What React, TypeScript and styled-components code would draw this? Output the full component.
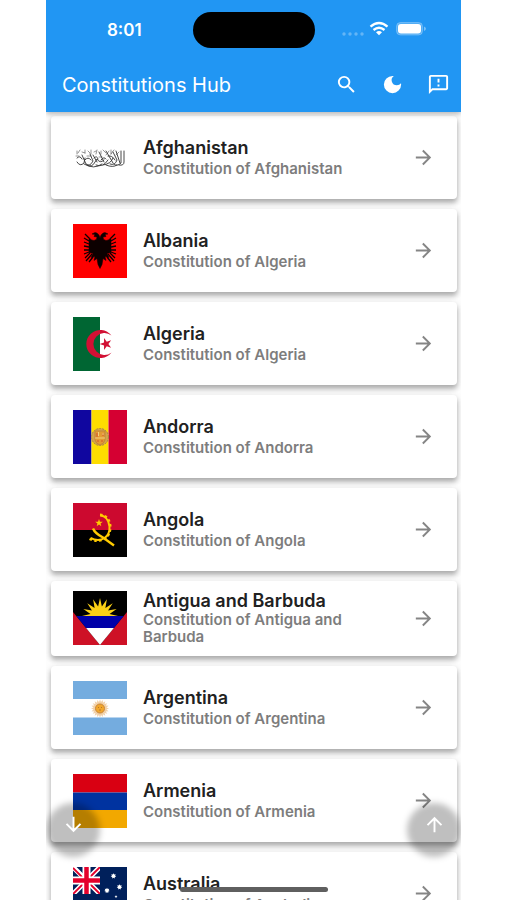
import React from "react";
import styled, { createGlobalStyle } from "styled-components";
import {
  MdArrowDownward,
  MdArrowForward,
  MdArrowUpward,
  MdDarkMode,
  MdOutlineFeedback,
  MdSearch,
} from "react-icons/md";

const GlobalStyle = createGlobalStyle`
  *, *::before, *::after { box-sizing: border-box; }
  body { margin: 0; background: #ffffff; font-family: Inter, "Liberation Sans", sans-serif; }
  button { font: inherit; color: inherit; border: 0; padding: 0; background: none; cursor: pointer; }
`;

const Page = styled.div`
  height: 100vh;
  padding: 0 46px;
`;

const Phone = styled.div`
  position: relative;
  display: flex;
  flex-direction: column;
  height: 100%;
  overflow: hidden;
  background: #fdfdfd;
`;

const Header = styled.header`
  position: relative;
  z-index: 1;
  flex: none;
  background: #2196f3;
  color: #ffffff;
  box-shadow: 0 2px 5px rgba(0, 0, 0, 0.28);
`;

const StatusBar = styled.div`
  display: grid;
  grid-template-columns: 1fr 122px 1fr;
  align-items: center;
  height: 59px;
`;

const Clock = styled.time`
  padding-left: 10px;
  text-align: center;
  font-size: 17px;
  font-weight: 600;
  line-height: 20px;
`;

const Island = styled.div`
  height: 36px;
  border-radius: 18px;
  background: #000000;
`;

const StatusIcons = styled.div`
  display: flex;
  align-items: center;
  padding-left: 26px;
`;

const TitleBar = styled.div`
  display: flex;
  align-items: center;
  justify-content: space-between;
  height: 53px;
  padding: 0 11px 2px 16px;
`;

const AppTitle = styled.h1`
  margin: 0;
  font-size: 20px;
  font-weight: 400;
  line-height: 24px;
`;

const Actions = styled.div`
  display: flex;
  gap: 23px;
`;

const IconButton = styled.button`
  display: flex;
  font-size: 23px;
`;

const List = styled.ul`
  display: flex;
  flex-direction: column;
  gap: 10px;
  flex: 1;
  min-height: 0;
  margin: 0;
  padding: 4px 4px 0 5px;
  overflow: hidden;
  list-style: none;
`;

const Item = styled.li`
  flex: none;
`;

const Card = styled.button`
  display: flex;
  align-items: center;
  gap: 16px;
  width: 100%;
  min-height: 75px;
  padding: 0 22px;
  border-radius: 4px;
  background: #ffffff;
  text-align: left;
  box-shadow: 0 4px 5px rgba(0, 0, 0, 0.24), 0 2px 7px rgba(0, 0, 0, 0.14);
`;

const FlagFrame = styled.span<{ $compact?: boolean }>`
  display: flex;
  flex: none;
  padding: ${(p) => (p.$compact ? "10px 0 11px" : "15px 0 14px")};
`;

const Labels = styled.span<{ $compact?: boolean }>`
  display: flex;
  flex: 1;
  flex-direction: column;
  gap: ${(p) => (p.$compact ? 0 : 2)}px;
  padding: 0 16px ${(p) => (p.$compact ? 2 : 0)}px 0;
`;

const Name = styled.span`
  color: #212121;
  font-size: 18px;
  font-weight: 600;
  line-height: 20px;
`;

const Detail = styled.span`
  color: #7d7d7d;
  font-size: 15px;
  font-weight: 600;
  line-height: 17px;
`;

const Arrow = styled(MdArrowForward)`
  flex: none;
  color: #858585;
  font-size: 23px;
`;

const JumpButton = styled.button<{ $side: "left" | "right" }>`
  position: absolute;
  bottom: 43px;
  ${(p) => p.$side}: 0;
  display: flex;
  align-items: center;
  justify-content: center;
  width: 54px;
  height: 54px;
  padding-bottom: 12px;
  color: #ffffff;
  font-size: 23px;

  &::before {
    content: "";
    position: absolute;
    inset: 0;
    border-radius: 50%;
    background: rgba(0, 0, 0, 0.25);
    filter: blur(3px);
  }

  svg { position: relative; }
`;

const HomeIndicator = styled.div`
  position: absolute;
  bottom: 8px;
  left: 50%;
  width: 148px;
  height: 5px;
  border-radius: 3px;
  background: #5f5f5f;
  transform: translateX(-50%);
`;

const star = (cx: number, cy: number, r: number, points = 5, inner = 0.4, turn = -90) =>
  Array.from({ length: points * 2 }, (_, i) => {
    const a = ((turn + (i * 180) / points) * Math.PI) / 180;
    const d = i % 2 ? r * inner : r;
    return `${(cx + d * Math.cos(a)).toFixed(2)},${(cy + d * Math.sin(a)).toFixed(2)}`;
  }).join(" ");

const Flag = ({ children }: { children: React.ReactNode }) => (
  <svg width="54" height="54" viewBox="0 0 54 54" aria-hidden="true">{children}</svg>
);

const Afghanistan = () => (
  <Flag>
    <g fill="none" stroke="#333" strokeWidth=".9" strokeLinecap="round">
      <path d="M4 31q3 5 7 1l1-5M9 24l4 9q4 3 7-3l-3-7M14 34q5 3 8-3l2-3q3 5 7 1M20 24l4 7M23 34q7 3 12-5M26 21l5 10M30 34q8-1 10-7M33 20l7 12M37 33q5 2 7-4l-4-8M43 20l4 12M48 20v12q-4 4-7 1M51 20v11q0 4-5 3" />
      <path d="M4 27q3-3 5 1M12 29q3-4 6 0M21 27q3-3 4 1M28 29q3-4 5-1M35 25q4-1 7 4M11 33q10 6 18 0M33 34q7 3 11 0" />
      <path d="M4 20v3M7 19l-2 3M9 21l3 1M12 19v3M15 20l2 2M18 19v4M21 21l2-1M24 19l-1 4M28 20v3M30 19l3 3M36 20l-3 4M38 19v4M41 19l-3 4M46 21l-3 3M3 25h3M14 25h4M26 26h3" strokeWidth=".8" opacity=".65" />
    </g>
  </Flag>
);

const Albania = () => (
  <Flag>
    <path fill="#f00" d="M0 0h54v54H0z" />
    <g fill="#0c0000" stroke="#0c0000">
      <path
        strokeWidth=".5"
        d="M27 14q-1-5-5-5.500l-3 1.500 3 .5-1 2 3 .5q0 3-3 3.500-3 0-5-3v15l4 1-2 4 4-1-1 4 3-2 1 6 2 4 2-4 1-6 3 2-1-4 4 1-2-4 4-1v-15q-2 3-5 3-3-.5-3-3.500l3-.5-1-2 3-.5-3-1.500q-4 .5-5 5.500z"
      />
      <path
        fill="none"
        strokeWidth="1.300"
        d="M16 14l-4-4M16 17l-5-3M16 20l-5-2M16 23l-5-1M16 26h-5M16 28l-5 2M17 29l-5 5M19 30l-6 7M20 33l-4 5M38 14l4-4M38 17l5-3M38 20l5-2M38 23l5-1M38 26h5M38 28l5 2M37 29l5 5M35 30l6 7M34 33l4 5"
      />
    </g>
  </Flag>
);

const Algeria = () => (
  <Flag>
    <path fill="#fff" d="M0 0h54v54H0z" />
    <path fill="#063" d="M0 0h27v54H0z" />
    <path fill="#d21034" d="M38.500 18.600a14 14 0 1 0 0 16.800 11 11 0 1 1 0-16.800z" />
    <polygon fill="#d21034" points={star(33, 27, 6.3, 5, 0.38, -180)} />
  </Flag>
);

const Andorra = () => (
  <Flag>
    <path fill="#10069f" d="M0 0h18.500v54H0z" />
    <path fill="#fedd00" d="M18.500 0h17v54h-17z" />
    <path fill="#d50032" d="M35.500 0H54v54H35.500z" />
    <circle cx="27" cy="27" r="8.500" fill="#d6a548" stroke="#a58246" strokeDasharray="2 1" />
    <path d="M22 21h10v9q-1 4-5 5-4-1-5-5z" fill="#e39a33" stroke="#c0853a" />
    <path d="M24 23v4m6-4v3M24 31h2m3-1v2" stroke="#d0572d" />
    <path d="M25.500 22v4M22 28h10M29 24h2" stroke="#f3cf7d" fill="none" />
  </Flag>
);

const Angola = () => (
  <Flag>
    <path fill="#cc092f" d="M0 0h54v27H0z" />
    <path d="M0 27h54v27H0z" />
    <g fill="none" stroke="#ffcb00">
      <path d="M27 12.500q8 0 9.500 11 .5 8-5 11.500-6 4-14 0" strokeWidth="2" />
      <path d="M27 11.500q9.500 1 10.500 12 0 9-6 12.500-7 4-15 0" strokeWidth="2.200" strokeDasharray="2.500 2.500" />
      <path d="M20 25.500q2 5 10 9l11 8" strokeWidth="2.400" />
    </g>
    <polygon fill="#ffcb00" points={star(26, 20, 4)} />
  </Flag>
);

const Antigua = () => (
  <Flag>
    <path fill="#ce1126" d="M0 0h54v54H0z" />
    <path d="M0 0h54v21L27 54 0 21z" />
    <polygon fill="#fcd116" points={star(27, 25, 18, 16, 0.54)} />
    <path fill="#0000a8" d="M3.300 25h47.400l-9.800 12H13.100z" />
    <path fill="#fff" d="M13.100 37h27.800L27 54z" />
  </Flag>
);

const Argentina = () => (
  <Flag>
    <path fill="#fff" d="M0 0h54v54H0z" />
    <path fill="#74acdf" d="M0 0h54v18H0zM0 36.500h54V54H0z" />
    <polygon fill="#e9b779" opacity=".65" points={star(27, 27.5, 9, 20, 0.72)} />
    <circle cx="27" cy="27.500" r="4.500" fill="#f2a72c" stroke="#c8873a" />
    <path d="M25 26.500h1m2 0h1m-3 2.500h2" stroke="#b87628" />
  </Flag>
);

const Armenia = () => (
  <Flag>
    <path fill="#d90012" d="M0 0h54v18.500H0z" />
    <path fill="#0033a0" d="M0 18.500h54V36H0z" />
    <path fill="#f2a800" d="M0 36h54v18H0z" />
  </Flag>
);

const Australia = () => (
  <Flag>
    <path fill="#00205b" d="M0 0h54v54H0z" />
    <path stroke="#fff" strokeWidth="5" d="M0 0l27 27M27 0L0 27" />
    <path stroke="#e4002b" strokeWidth="1.800" d="M0 1l12 12M27 0L15 12M0 27l11-11M16 16l11 11" />
    <path stroke="#fff" strokeWidth="8" d="M13.500 0v27M0 13.500h27" />
    <path stroke="#e4002b" strokeWidth="4.500" d="M13.500 0v27M0 13.500h27" />
    <path fill="#00205b" d="M27 0h27v54H0V27h27z" />
    <g fill="#fff">
      <polygon points={star(13.5, 38, 5, 7, 0.45)} />
      <polygon points={star(40.5, 9, 2.8, 7, 0.6)} />
      <polygon points={star(34, 23.5, 2.8, 7, 0.6)} />
      <polygon points={star(46.5, 20, 2.8, 7, 0.6)} />
      <polygon points={star(43, 29.5, 1.6)} />
      <polygon points={star(40.5, 44, 2.8, 7, 0.6)} />
    </g>
  </Flag>
);

const countries = [
  { name: "Afghanistan", detail: "Constitution of Afghanistan", flag: Afghanistan },
  { name: "Albania", detail: "Constitution of Algeria", flag: Albania },
  { name: "Algeria", detail: "Constitution of Algeria", flag: Algeria },
  { name: "Andorra", detail: "Constitution of Andorra", flag: Andorra },
  { name: "Angola", detail: "Constitution of Angola", flag: Angola },
  { name: "Antigua and Barbuda", detail: "Constitution of Antigua and Barbuda", flag: Antigua, compact: true },
  { name: "Argentina", detail: "Constitution of Argentina", flag: Argentina },
  { name: "Armenia", detail: "Constitution of Armenia", flag: Armenia },
  { name: "Australia", detail: "Constitution of Australia", flag: Australia },
];

const Signals = () => (
  <svg width="88" height="20" viewBox="0 0 88 20" aria-hidden="true">
    <g fill="#fff" opacity=".3">
      <circle cx="3" cy="14" r="1.700" />
      <circle cx="9" cy="14" r="1.700" />
      <circle cx="15" cy="14" r="1.700" />
      <circle cx="21" cy="14" r="1.700" />
    </g>
    <g fill="none" stroke="#fff" strokeWidth="2.300">
      <path d="M29.500 6.700q8.500-7.400 17 0" />
      <path d="M32.500 10q5.500-4.600 11 0" />
    </g>
    <path fill="#fff" d="M35 12.200q3-2.200 6 0l-3 3z" />
    <rect x="55.500" y="2.500" width="26" height="12.500" rx="4" fill="#fff" fillOpacity=".22" stroke="#fff" strokeOpacity=".25" />
    <rect x="57" y="4" width="23" height="9.500" rx="3" fill="#fff" />
    <path fill="#fff" fillOpacity=".4" d="M83 6.500q2 .7 2 2.200t-2 2.200z" />
  </svg>
);

export default function App() {
  return (
    <>
      <GlobalStyle />
      <Page>
        <Phone>
          <Header>
            <StatusBar>
              <Clock>8:01</Clock>
              <Island />
              <StatusIcons><Signals /></StatusIcons>
            </StatusBar>
            <TitleBar>
              <AppTitle>Constitutions Hub</AppTitle>
              <Actions>
                <IconButton aria-label="Search"><MdSearch /></IconButton>
                <IconButton aria-label="Dark mode"><MdDarkMode /></IconButton>
                <IconButton aria-label="Feedback"><MdOutlineFeedback /></IconButton>
              </Actions>
            </TitleBar>
          </Header>
          <List>
            {countries.map(({ name, detail, flag: Picture, compact }) => (
              <Item key={name}>
                <Card>
                  <FlagFrame $compact={compact}><Picture /></FlagFrame>
                  <Labels $compact={compact}>
                    <Name>{name}</Name>
                    <Detail>{detail}</Detail>
                  </Labels>
                  <Arrow />
                </Card>
              </Item>
            ))}
          </List>
          <JumpButton $side="left" aria-label="Jump to bottom"><MdArrowDownward /></JumpButton>
          <JumpButton $side="right" aria-label="Jump to top"><MdArrowUpward /></JumpButton>
          <HomeIndicator />
        </Phone>
      </Page>
    </>
  );
}
